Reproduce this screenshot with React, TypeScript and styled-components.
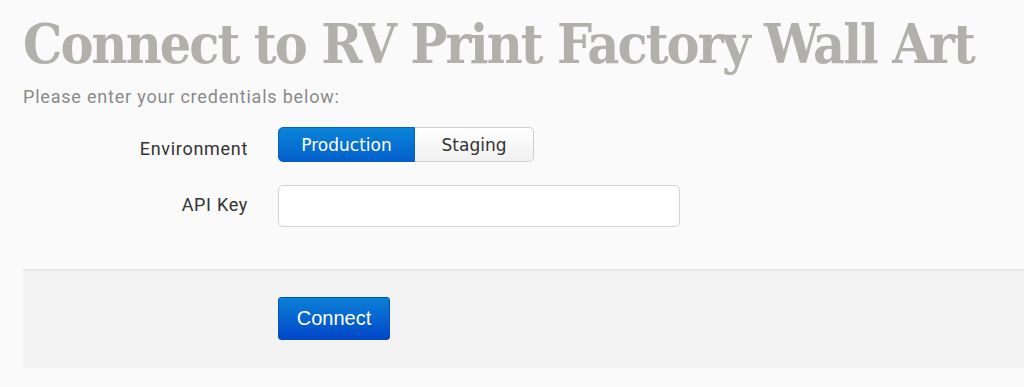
import styled, { createGlobalStyle } from 'styled-components'

const GlobalStyle = createGlobalStyle`
  html, body {
    margin: 0;
    padding: 0;
    background: #fafafa;
  }
  body {
    font-family: "Roboto", "Liberation Sans", sans-serif;
  }
`

const Page = styled.div`
  padding: 8px 0 0 23px;
  width: 1024px;
  height: 387px;
  box-sizing: border-box;
  overflow: hidden;
`

const Title = styled.h1`
  margin: 0;
  color: #b1b0ab;
  font-family: "DejaVu Serif Condensed", "DejaVu Serif", "Liberation Serif", serif;
  font-stretch: condensed;
  font-size: 55px;
  font-weight: 700;
  line-height: 72px;
  letter-spacing: -1.9px;
  white-space: nowrap;
`

const Intro = styled.p`
  margin: 6px 0 0 0;
  color: #8a8a8a;
  font-size: 18px;
  line-height: 22px;
  letter-spacing: 0.8px;
`

const Form = styled.div`
  margin-top: 19px;
  display: grid;
  grid-template-columns: 225px 1fr;
  column-gap: 30px;
  row-gap: 23px;
  align-items: start;
`

const Label = styled.label<{ $offset?: number }>`
  padding-top: ${p => p.$offset ?? 9}px;
  text-align: right;
  color: #333;
  font-size: 18px;
  line-height: 22px;
  letter-spacing: 0.7px;
`

const Segmented = styled.div`
  display: flex;
  width: 256px;
  height: 35px;
`

const Segment = styled.button<{ $active?: boolean }>`
  height: 35px;
  padding: 0;
  font-family: "DejaVu Sans", "Liberation Sans", sans-serif;
  font-size: 17px;
  cursor: pointer;
  border: 1px solid ${p => (p.$active ? '#0a5fc0' : '#cfcfcf')};
  color: ${p => (p.$active ? '#fff' : '#333')};
  background: ${p =>
    p.$active
      ? 'linear-gradient(#0a84d8, #0460cc)'
      : 'linear-gradient(#ffffff, #f0f0f0)'};

  &:first-child {
    width: 137px;
    border-radius: 5px 0 0 5px;
  }
  &:last-child {
    width: 119px;
    border-left: none;
    border-radius: 0 5px 5px 0;
  }
`

const Input = styled.input`
  display: block;
  width: 402px;
  height: 42px;
  box-sizing: border-box;
  border: 1px solid #d4d4d4;
  border-radius: 5px;
  background: #fff;
  font-size: 15px;
  padding: 0 10px;
  outline: none;
`

const Footer = styled.div`
  margin-top: 42px;
  height: 99px;
  box-sizing: border-box;
  border-top: 2px solid #e9e9e9;
  background: #f3f3f3;
  padding: 26px 0 0 255px;
`

const ConnectButton = styled.button`
  width: 112px;
  height: 43px;
  border: 1px solid #0350b8;
  border-radius: 3px;
  background: linear-gradient(#0a80d6, #0146c8);
  color: #fff;
  font-family: "Liberation Sans", Arial, sans-serif;
  font-size: 20px;
  cursor: pointer;
`

export default function App() {
  return (
    <>
      <GlobalStyle />
      <Page>
        <Title>Connect to RV Print Factory Wall Art</Title>
        <Intro>Please enter your credentials below:</Intro>

        <Form>
          <Label $offset={11}>Environment</Label>
          <Segmented>
            <Segment $active>Production</Segment>
            <Segment>Staging</Segment>
          </Segmented>

          <Label htmlFor="api-key">API Key</Label>
          <Input id="api-key" type="text" />
        </Form>

        <Footer>
          <ConnectButton>Connect</ConnectButton>
        </Footer>
      </Page>
    </>
  )
}
